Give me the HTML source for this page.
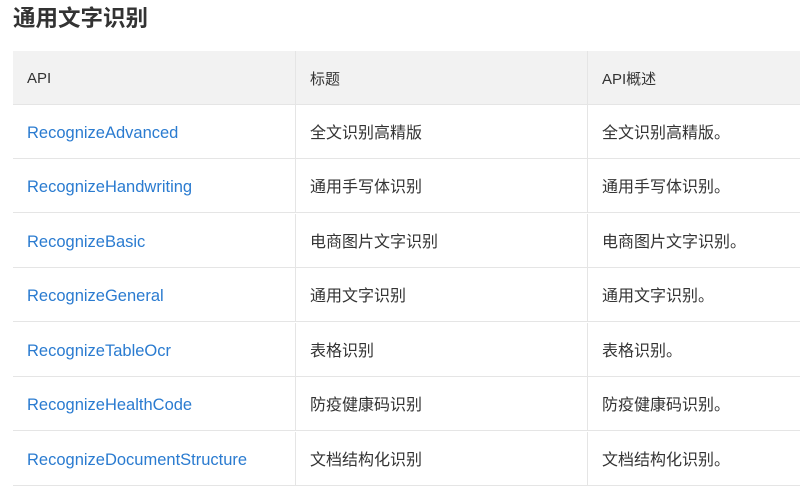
<!DOCTYPE html>
<html><head><meta charset="utf-8"><style>
body{margin:0;width:800px;height:500px;overflow:hidden;background:#fff;font-family:"Liberation Sans","Noto Sans CJK SC",sans-serif;color:#333;position:relative}
h1{position:absolute;left:13px;top:4px;margin:0;font-size:22.5px;font-weight:bold;color:#333;line-height:30px}
.r{position:absolute;left:13px;width:787px;height:54px;border-bottom:1px solid #e5e5e5;box-sizing:border-box}
.r div{position:absolute;top:0;height:100%;padding-left:14px;padding-top:18.5px;box-sizing:border-box;font-size:16px;line-height:20px;white-space:nowrap}
.r div.c1{padding-top:17.5px}
.c1{left:0;width:282px}
.c2{left:282px;width:292px;border-left:1px solid #e5e5e5}
.c3{left:574px;right:0;border-left:1px solid #e5e5e5}
.h{background:#f2f2f2;height:54px}
.h div{font-size:15px}
.r.h div.c1{padding-top:18px}
.r.h div.c2{padding-top:18.5px}
.r.h div.c3{padding-top:18.5px}
a{color:#2a7bd0;text-decoration:none;font-size:16.5px;line-height:20px}
</style></head><body>
<h1>通用文字识别</h1>
<div class="r h" style="top:51px"><div class="c1">API</div><div class="c2">标题</div><div class="c3">API概述</div></div>
<div class="r" style="top:105px"><div class="c1"><a>RecognizeAdvanced</a></div><div class="c2">全文识别高精版</div><div class="c3">全文识别高精版。</div></div>
<div class="r" style="top:159px"><div class="c1"><a>RecognizeHandwriting</a></div><div class="c2">通用手写体识别</div><div class="c3">通用手写体识别。</div></div>
<div class="r" style="top:214px"><div class="c1"><a>RecognizeBasic</a></div><div class="c2">电商图片文字识别</div><div class="c3">电商图片文字识别。</div></div>
<div class="r" style="top:268px"><div class="c1"><a>RecognizeGeneral</a></div><div class="c2">通用文字识别</div><div class="c3">通用文字识别。</div></div>
<div class="r" style="top:323px"><div class="c1"><a>RecognizeTableOcr</a></div><div class="c2">表格识别</div><div class="c3">表格识别。</div></div>
<div class="r" style="top:377px"><div class="c1"><a>RecognizeHealthCode</a></div><div class="c2">防疫健康码识别</div><div class="c3">防疫健康码识别。</div></div>
<div class="r" style="top:432px"><div class="c1"><a>RecognizeDocumentStructure</a></div><div class="c2">文档结构化识别</div><div class="c3">文档结构化识别。</div></div>
</body></html>
